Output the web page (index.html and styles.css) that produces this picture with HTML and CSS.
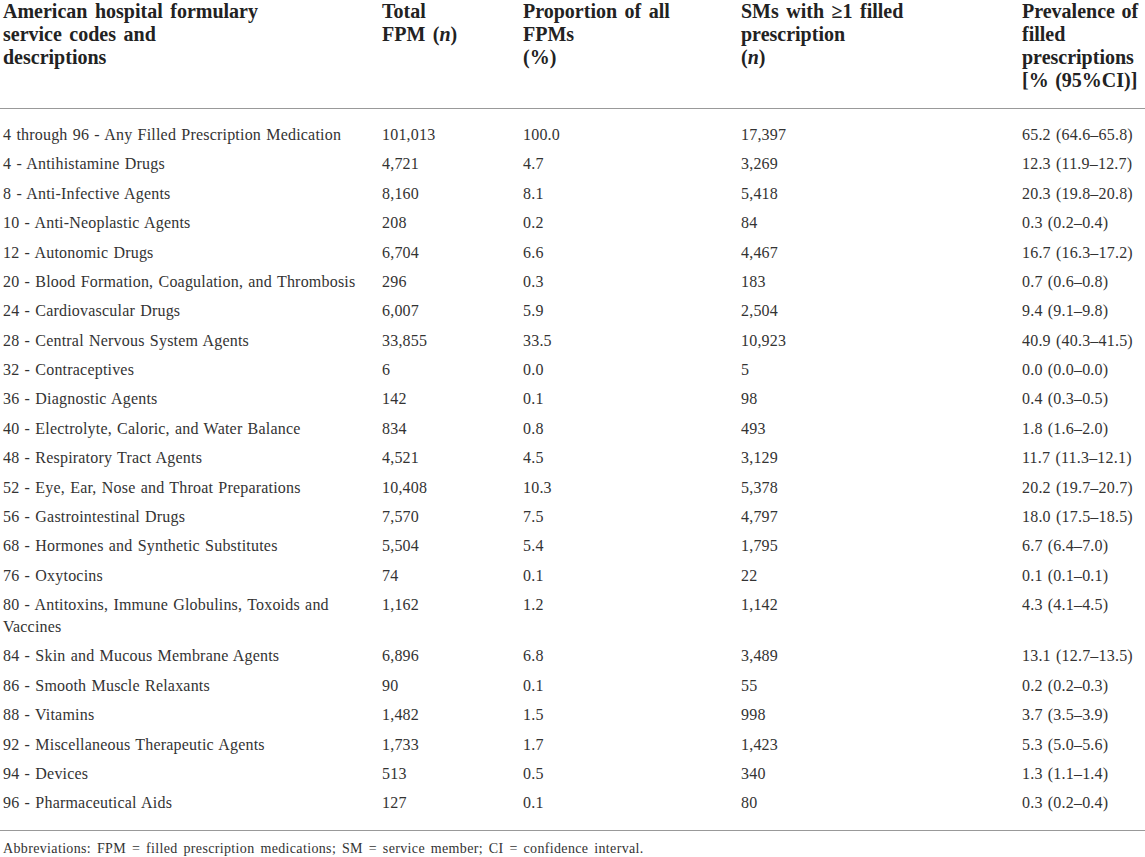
FILE: index.html
```html
<!DOCTYPE html>
<html>
<head>
<meta charset="utf-8">
<link rel="stylesheet" href="styles.css">
</head>
<body>
<table class="tbl">
<colgroup>
<col class="c1"><col class="c2"><col class="c3"><col class="c4"><col class="c5">
</colgroup>
<thead>
<tr>
<th>American hospital formulary<br>service codes and<br>descriptions</th>
<th>Total<br>FPM (<i>n</i>)</th>
<th>Proportion of all<br>FPMs<br>(%)</th>
<th>SMs with ≥1 filled<br>prescription<br>(<i>n</i>)</th>
<th>Prevalence of<br>filled<br>prescriptions<br>[% (95%CI)]</th>
</tr>
</thead>
<tbody>
<tr class="first"><td>4 through 96 - Any Filled Prescription Medication</td><td>101,013</td><td>100.0</td><td>17,397</td><td>65.2 (64.6–65.8)</td></tr>
<tr><td>4 - Antihistamine Drugs</td><td>4,721</td><td>4.7</td><td>3,269</td><td>12.3 (11.9–12.7)</td></tr>
<tr><td>8 - Anti-Infective Agents</td><td>8,160</td><td>8.1</td><td>5,418</td><td>20.3 (19.8–20.8)</td></tr>
<tr><td>10 - Anti-Neoplastic Agents</td><td>208</td><td>0.2</td><td>84</td><td>0.3 (0.2–0.4)</td></tr>
<tr><td>12 - Autonomic Drugs</td><td>6,704</td><td>6.6</td><td>4,467</td><td>16.7 (16.3–17.2)</td></tr>
<tr><td>20 - Blood Formation, Coagulation, and Thrombosis</td><td>296</td><td>0.3</td><td>183</td><td>0.7 (0.6–0.8)</td></tr>
<tr><td>24 - Cardiovascular Drugs</td><td>6,007</td><td>5.9</td><td>2,504</td><td>9.4 (9.1–9.8)</td></tr>
<tr><td>28 - Central Nervous System Agents</td><td>33,855</td><td>33.5</td><td>10,923</td><td>40.9 (40.3–41.5)</td></tr>
<tr><td>32 - Contraceptives</td><td>6</td><td>0.0</td><td>5</td><td>0.0 (0.0–0.0)</td></tr>
<tr><td>36 - Diagnostic Agents</td><td>142</td><td>0.1</td><td>98</td><td>0.4 (0.3–0.5)</td></tr>
<tr><td>40 - Electrolyte, Caloric, and Water Balance</td><td>834</td><td>0.8</td><td>493</td><td>1.8 (1.6–2.0)</td></tr>
<tr><td>48 - Respiratory Tract Agents</td><td>4,521</td><td>4.5</td><td>3,129</td><td>11.7 (11.3–12.1)</td></tr>
<tr><td>52 - Eye, Ear, Nose and Throat Preparations</td><td>10,408</td><td>10.3</td><td>5,378</td><td>20.2 (19.7–20.7)</td></tr>
<tr><td>56 - Gastrointestinal Drugs</td><td>7,570</td><td>7.5</td><td>4,797</td><td>18.0 (17.5–18.5)</td></tr>
<tr><td>68 - Hormones and Synthetic Substitutes</td><td>5,504</td><td>5.4</td><td>1,795</td><td>6.7 (6.4–7.0)</td></tr>
<tr><td>76 - Oxytocins</td><td>74</td><td>0.1</td><td>22</td><td>0.1 (0.1–0.1)</td></tr>
<tr><td>80 - Antitoxins, Immune Globulins, Toxoids and<br>Vaccines</td><td>1,162</td><td>1.2</td><td>1,142</td><td>4.3 (4.1–4.5)</td></tr>
<tr><td>84 - Skin and Mucous Membrane Agents</td><td>6,896</td><td>6.8</td><td>3,489</td><td>13.1 (12.7–13.5)</td></tr>
<tr><td>86 - Smooth Muscle Relaxants</td><td>90</td><td>0.1</td><td>55</td><td>0.2 (0.2–0.3)</td></tr>
<tr><td>88 - Vitamins</td><td>1,482</td><td>1.5</td><td>998</td><td>3.7 (3.5–3.9)</td></tr>
<tr><td>92 - Miscellaneous Therapeutic Agents</td><td>1,733</td><td>1.7</td><td>1,423</td><td>5.3 (5.0–5.6)</td></tr>
<tr><td>94 - Devices</td><td>513</td><td>0.5</td><td>340</td><td>1.3 (1.1–1.4)</td></tr>
<tr class="last"><td>96 - Pharmaceutical Aids</td><td>127</td><td>0.1</td><td>80</td><td>0.3 (0.2–0.4)</td></tr>
</tbody>
</table>
<p class="foot">Abbreviations: FPM = filled prescription medications; SM = service member; CI = confidence interval.</p>
</body>
</html>
```

FILE: styles.css
```css
html, body {
  margin: 0;
  padding: 0;
  background: #fff;
}
body {
  font-family: "Liberation Serif", "Times New Roman", serif;
  color: #333;
}
.tbl {
  width: 1145px;
  table-layout: fixed;
  border-collapse: collapse;
}
.c1 { width: 379px; }
.c2 { width: 141px; }
.c3 { width: 218px; }
.c4 { width: 281px; }
.c5 { width: 126px; }
.tbl th {
  text-align: left;
  vertical-align: top;
  white-space: nowrap;
  font-weight: bold;
  font-size: 20px;
  line-height: 23px;
  word-spacing: 2.5px;
  color: #222;
  padding: 0 3px 16px 3px;
  border-bottom: 1px solid #999;
}
.tbl th:last-child,
.tbl td:last-child {
  padding-right: 0;
}
.tbl th:last-child {
  word-spacing: 1.5px;
}
.tbl td {
  font-size: 16px;
  line-height: 22px;
  padding: 3.7px 3px;
  vertical-align: top;
  white-space: nowrap;
  letter-spacing: 0.2px;
  word-spacing: 1px;
}
.tbl tr.first td {
  padding-top: 15px;
}
.tbl tr.last td {
  padding-bottom: 16px;
  border-bottom: 1px solid #999;
}
.foot {
  margin: 0;
  padding: 9px 3px 0 3px;
  font-size: 14px;
  line-height: 17px;
  letter-spacing: 0.35px;
  word-spacing: 2px;
  color: #333;
}
```
